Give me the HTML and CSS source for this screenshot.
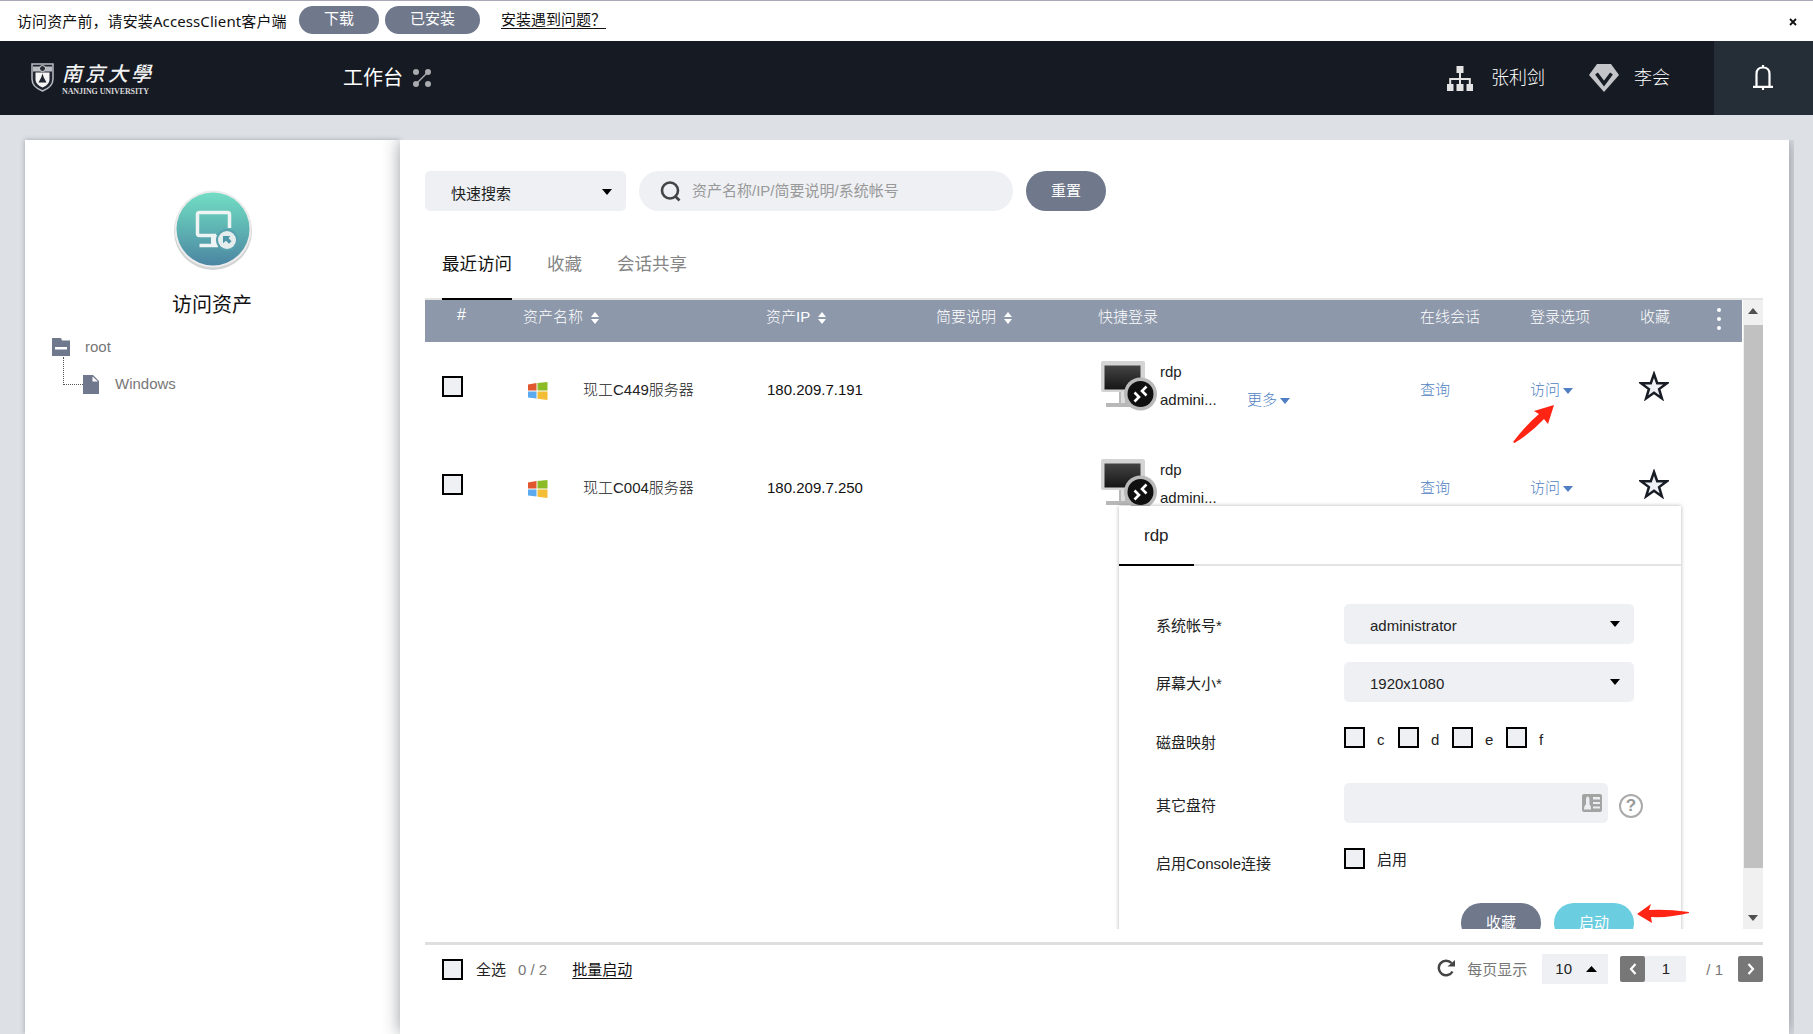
FILE: index.html
```html
<!DOCTYPE html>
<html lang="zh-CN">
<head>
<meta charset="utf-8">
<title>工作台 - 访问资产</title>
<link rel="stylesheet" href="styles.css">
</head>
<body>
<svg class="defs" width="0" height="0" aria-hidden="true">
  <defs>
    <linearGradient id="teal" x1="0" y1="0" x2="0" y2="1"><stop offset="0" stop-color="#74dcc5"/><stop offset=".3" stop-color="#66c5b9"/><stop offset="1" stop-color="#4b85a2"/></linearGradient>
    <linearGradient id="screen" x1="0" y1="0" x2="0" y2="1"><stop offset="0" stop-color="#444"/><stop offset="1" stop-color="#161616"/></linearGradient>
    <symbol id="sort" viewBox="0 0 10 14"><path d="M5 1 9 6H1zM1 8h8L5 13z" fill="#fff"/></symbol>
    <symbol id="down" viewBox="0 0 10 6"><path d="M0 0h10L5 6z" fill="currentColor"/></symbol>
    <symbol id="win" viewBox="0 0 20 18"><path d="M0 2.600 8.500 1v7.500H0z" fill="#e0562f"/><path d="M9.500 1 19.500 0v8.500h-10z" fill="#8cbb25"/><path d="M0 9.500h8.500v7L0 15.500z" fill="#5ba9ee"/><path d="M9.500 9.500h10V18l-10-1.300z" fill="#f4bd36"/></symbol>
    <symbol id="rdp" viewBox="0 0 56 52"><path d="M2 0h40a2 2 0 0 1 2 2v29H2a2 2 0 0 1-2-2V2a2 2 0 0 1 2-2z" fill="#d4d4d4"/><path d="M3.500 4.500h36v24h-36z" fill="url(#screen)"/><path d="M18 31h8v11h6v4H5v-4h13z" fill="#b8b8b8"/><path d="M20 31h4v11h-4z" fill="#ddd"/><circle cx="39.500" cy="33" r="16.500" fill="#b9b9b9"/><circle cx="39.500" cy="33" r="13" fill="#101010"/><path d="m33.500 31.500 4.500 4.500-4.500 4.500M45.500 25.500 41 30l4.500 4.500" fill="none" stroke="#fff" stroke-width="2.600"/></symbol>
    <symbol id="star" viewBox="0 0 30 30"><path d="m15 3 3.200 9.200 9.600.1-7.700 5.800 2.800 9.300-7.900-5.600-7.900 5.600 2.800-9.300-7.700-5.800 9.600-.1z" fill="#eef0f5" stroke="#181c24" stroke-width="2.500"/></symbol>
  </defs>
</svg>

<div class="notice">
  <span class="notice-text">访问资产前，请安装AccessClient客户端</span>
  <button class="pill small">下载</button>
  <button class="pill small wide">已安装</button>
  <a class="help-link">安装遇到问题？</a>
  <svg class="close" width="8" height="8" viewBox="0 0 8 8"><path d="m1 1 6 6M7 1 1 7" stroke="#111" stroke-width="1.800"/></svg>
</div>

<header class="header">
  <div class="logo">
    <svg width="23" height="29" viewBox="0 0 23 29"><path d="M1 1h21v15q0 8-10.500 12Q1 24 1 16z" fill="#20252f" stroke="#b8bbc0" stroke-width="1.500"/><path d="M2 3.500h19v5H2z" fill="#babdc2"/><circle cx="11.500" cy="5.500" r="3" fill="#2a3039" stroke="#ddd"/><path d="M4.500 9.500h14v7q0 5-7 8-7-3-7-8z" fill="#f5f5f5"/><path d="m11.500 10.500 1.300 4 2.700 5h-8l2.700-5z" fill="#20252f"/></svg>
    <div class="logo-words"><span class="logo-cn">南京大學</span><span class="logo-en">NANJING UNIVERSITY</span></div>
  </div>
  <div class="workbench">工作台
    <svg width="18" height="18" viewBox="0 0 18 18"><g fill="#a9abae"><circle cx="3" cy="3" r="3"/><circle cx="15" cy="3" r="3"/><circle cx="3" cy="15" r="3"/><circle cx="15" cy="15" r="3"/></g><path d="M15 3 3 15" stroke="#a9abae" stroke-width="1.500"/></svg>
  </div>
  <div class="user org">
    <svg width="26" height="25" viewBox="0 0 26 25"><path d="M9.500 0h7v7h-7zM0 18h6.500v7H0zM9.500 18h7v7h-7zM19.500 18H26v7h-6.500z" fill="#e4e4e4"/><path d="M13 7v11M3.200 18v-5h19.600v5" fill="none" stroke="#e4e4e4" stroke-width="2"/></svg>
    <span>张利剑</span>
  </div>
  <div class="user">
    <svg width="30" height="28" viewBox="0 0 30 28"><path d="M8 0h14l8 11-15 17L0 11z" fill="#c3c5c9"/><path d="m7.500 9.500 7.500 10 7.500-10" fill="none" stroke="#171b24" stroke-width="3.500"/></svg>
    <span>李会</span>
  </div>
  <div class="bell"><svg width="20" height="26" viewBox="0 0 20 26"><path d="M3.500 21V9q0-6.500 6.500-6.500T16.500 9v12M0 21.800h20M10 0v3M10 22v3" fill="none" stroke="#fff" stroke-width="2.200"/></svg></div>
</header>

<div class="page">
  <aside class="sidebar">
    <svg class="asset-icon" width="82" height="82" viewBox="0 0 82 82"><circle cx="41" cy="42" r="39" fill="#d2d3d4"/><circle cx="41" cy="40" r="38.500" fill="#ececec"/><circle cx="41" cy="40" r="36.500" fill="url(#teal)"/><path d="M57.500 39V25.500q0-2-2-2h-28q-2 0-2 2v19q0 2 2 2H44M27.500 56.500H46" fill="none" stroke="#eef3f3" stroke-width="3.500"/><path d="M39 46h7v10h-7z" fill="#eef3f3"/><circle cx="55" cy="51" r="11" fill="#57a0ae"/><circle cx="55" cy="51" r="9" fill="#e6eded"/><path d="M51 47h7.500l-2 2 3 3.200-2.500 2.500-3-3-3 2.500z" fill="#4f96a8"/></svg>
    <div class="asset-title">访问资产</div>
    <div class="tree">
      <div class="node"><svg width="18" height="18" viewBox="0 0 18 18"><path d="M0 0h9l1 2.500h8V18H0z" fill="#6f788c"/><path d="M3 9h12v2.500H3z" fill="#fff"/></svg><span>root</span></div>
      <div class="node child"><i class="branch"></i><svg width="16" height="19" viewBox="0 0 16 19"><path d="M0 0h10l6 6v13H0z" fill="#6f788c"/><path d="M9.500 1.500v5H15z" fill="#fff"/></svg><span>Windows</span></div>
    </div>
  </aside>

  <main class="main">
    <div class="filters">
      <div class="select quick"><span>快速搜索</span><svg width="10" height="6"><use href="#down"/></svg></div>
      <div class="search"><svg width="21" height="21" viewBox="0 0 21 21"><circle cx="10" cy="9.500" r="8" fill="none" stroke="#444" stroke-width="2.600"/><path d="m15 15 4.500 4.500" stroke="#444" stroke-width="2.600"/></svg><span>资产名称/IP/简要说明/系统帐号</span></div>
      <button class="pill reset">重置</button>
    </div>
    <nav class="tabs"><span class="tab active">最近访问</span><span class="tab">收藏</span><span class="tab">会话共享</span></nav>

    <div class="table-area">
      <div class="table">
        <div class="row head">
          <span class="hash">#</span>
          <span>资产名称<svg class="sort" width="10" height="14"><use href="#sort"/></svg></span>
          <span>资产IP<svg class="sort" width="10" height="14"><use href="#sort"/></svg></span>
          <span>简要说明<svg class="sort" width="10" height="14"><use href="#sort"/></svg></span>
          <span>快捷登录</span><span>在线会话</span><span>登录选项</span><span>收藏</span>
          <svg class="dots" width="4" height="22" viewBox="0 0 4 22"><g fill="#fff"><circle cx="2" cy="2" r="2"/><circle cx="2" cy="11" r="2"/><circle cx="2" cy="20" r="2"/></g></svg>
        </div>
        <div class="row item">
          <i class="check"></i>
          <span class="name"><svg width="20" height="18"><use href="#win"/></svg>现工C449服务器</span>
          <span class="ip">180.209.7.191</span><span></span>
          <div class="login"><svg width="56" height="52"><use href="#rdp"/></svg><div class="login-text"><span>rdp</span><span>admini...</span></div><a class="more">更多<svg width="10" height="6"><use href="#down"/></svg></a></div>
          <a>查询</a><a>访问<svg width="10" height="6"><use href="#down"/></svg></a>
          <svg class="star" width="30" height="30"><use href="#star"/></svg>
          <svg class="pointer visit" width="42" height="38" viewBox="0 0 42 38"><path d="M41 0 21 6l5 3Q13 20 0 37l1.500 1Q18 28 31 14l4 5z" fill="#ff2413"/></svg>
        </div>
        <div class="row item">
          <i class="check"></i>
          <span class="name"><svg width="20" height="18"><use href="#win"/></svg>现工C004服务器</span>
          <span class="ip">180.209.7.250</span><span></span>
          <div class="login"><svg width="56" height="52"><use href="#rdp"/></svg><div class="login-text"><span>rdp</span><span>admini...</span></div></div>
          <a>查询</a><a>访问<svg width="10" height="6"><use href="#down"/></svg></a>
          <svg class="star" width="30" height="30"><use href="#star"/></svg>
        </div>

        <section class="popup">
          <div class="popup-head"><span>rdp</span></div>
          <div class="form">
            <div class="field"><label>系统帐号*</label><div class="select"><span>administrator</span><svg width="10" height="6"><use href="#down"/></svg></div></div>
            <div class="field"><label>屏幕大小*</label><div class="select"><span>1920x1080</span><svg width="10" height="6"><use href="#down"/></svg></div></div>
            <div class="field drives"><label>磁盘映射</label><div class="checks"><i class="check"></i><span>c</span><i class="check"></i><span>d</span><i class="check"></i><span>e</span><i class="check"></i><span>f</span></div></div>
            <div class="field other"><label>其它盘符</label>
              <div class="input"><svg width="20" height="18" viewBox="0 0 20 18"><rect width="20" height="18" rx="2" fill="#a3a3a3"/><path d="M2 15.500q0-4 2-5V6q0-3.500 1.700-3.500T7.500 6v4.500q1.500 1 1.500 5zM11 3h7v2.500h-7zM11 8h7v2h-7zM11 12.500h7v2h-7z" fill="#eceef2"/></svg></div>
              <span class="question">?</span>
            </div>
            <div class="field console"><label>启用Console连接</label><div class="checks"><i class="check"></i><span>启用</span></div></div>
            <div class="actions"><button class="pill">收藏</button><button class="pill start">启动</button></div>
          </div>
        </section>
      </div>
      <div class="scrollbar"><svg width="10" height="6" viewBox="0 0 10 6"><path d="M0 6h10L5 0z" fill="#505050"/></svg><i class="thumb"></i><svg width="10" height="6" viewBox="0 0 10 6"><path d="M0 0h10L5 6z" fill="#505050"/></svg></div>
      <svg class="pointer launch" width="52" height="20" viewBox="0 0 52 20"><path d="M0 10 14 0l-2 6q18-1 40 2v1Q32 14 14 13l1 6z" fill="#ff2413"/></svg>
    </div>

    <footer class="footer">
      <i class="check"></i><span class="all">全选</span><span class="count">0 / 2</span><a class="batch">批量启动</a>
      <svg class="refresh" width="18" height="18" viewBox="0 0 18 18"><path d="M15.500 12.500A7.300 7.300 0 1 1 14.500 4" fill="none" stroke="#444" stroke-width="2.500"/><path d="M10.500 7.500H18V1z" fill="#444"/></svg>
      <span class="per">每页显示</span>
      <div class="size">10<svg width="11" height="6" viewBox="0 0 11 6"><path d="M0 6h11L5.500 0z"/></svg></div>
      <div class="step"><svg width="8" height="12" viewBox="0 0 8 12"><path d="M6.500 1 2 6l4.500 5" fill="none" stroke="#fff" stroke-width="2.200"/></svg></div>
      <div class="current">1</div><span class="total">/ 1</span>
      <div class="step"><svg width="8" height="12" viewBox="0 0 8 12"><path d="M1.500 1 6 6l-4.500 5" fill="none" stroke="#fff" stroke-width="2.200"/></svg></div>
    </footer>
  </main>
</div>
</body>
</html>
```
FILE: styles.css
```css
* { box-sizing: border-box; }
body { margin: 0; height: 1034px; overflow: hidden; background: #dde1e6; color: #222; font: 15px/20px "Liberation Sans", "Noto Sans CJK SC", sans-serif; display: flex; flex-direction: column; }
svg { display: block; flex: none; }
.defs { position: absolute; }
button { border: 0; padding: 0; font: inherit; }
span, a { white-space: nowrap; }
a { color: #4f7fc2; display: flex; gap: 3px; }
a svg { margin-top: 8px; }
.pill { width: 80px; height: 40px; border-radius: 20px; background: #70788c; color: #fff; flex: none; }

.notice { height: 41px; flex: none; background: #fff; border-top: 1px solid #a9a7b8; padding-left: 17px; display: flex; align-items: flex-start; color: #111; font-family: "Noto Sans", "Noto Sans CJK SC", sans-serif; }
.notice-text { width: 282px; padding-top: 10px; letter-spacing: .1px; }
.pill.small { width: 80px; height: 28px; border-radius: 14px; margin: 5px 6px 0 0; line-height: 25px; padding-bottom: 3px; }
.pill.small.wide { width: 95px; margin-right: 21px; }
.help-link { color: #111; margin-top: 8px; text-decoration: underline; text-underline-offset: 3px; }
.close { margin: 17px 16px 0 auto; }

.header { height: 74px; flex: none; background: #161a23; color: #fff; display: flex; align-items: center; }
.logo { width: 343px; padding-left: 31px; display: flex; gap: 8px; align-items: center; height: 42px; margin-top: -2px; }
.logo-words { display: flex; flex-direction: column; }
.logo-cn { font: italic 500 20px/27px "Noto Sans CJK SC", sans-serif; letter-spacing: 3px; color: #f3f3f3; height: 29px; }
.logo-en { font: bold 8px/8px "Liberation Serif", serif; color: #d6d7d9; letter-spacing: -.1px; }
.workbench { font-size: 20px; display: flex; align-items: center; gap: 10px; flex: 1; }
.user { font-size: 18px; font-weight: 300; display: flex; align-items: center; gap: 15px; margin-right: 44px; }
.user.org { gap: 18px; margin-right: 44px; }
.bell { width: 99px; height: 74px; background: #252d36; display: flex; align-items: center; justify-content: center; padding-right: 2px; }

.page { flex: 1; display: flex; padding: 25px 24px 0 25px; min-height: 0; }
.sidebar { width: 375px; background: #fff; box-shadow: 0 0 5px rgba(60, 70, 80, .4); display: flex; flex-direction: column; }
.asset-icon { margin: 49px 0 0 147px; }
.asset-title { font-size: 20px; line-height: 28px; margin: 20px 0 0 147px; color: #111; }
.tree { padding: 18px 0 0 27px; color: #777; }
.node { display: flex; align-items: center; height: 20px; gap: 15px; }
.node.child { margin-top: 17px; padding-left: 11px; gap: 0; }
.node.child span { margin-left: 16px; }
.branch { width: 20px; height: 28px; margin-top: -26px; border: dotted #555; border-width: 0 0 1px 1px; }

.main { flex: 1; background: #fff; box-shadow: 0 0 16px rgba(30, 35, 45, .45); position: relative; clip-path: inset(0 -5px -20px -25px); padding: 31px 26px 0 25px; min-width: 0; display: flex; flex-direction: column; }
.filters { display: flex; height: 40px; gap: 13px; }
.select { width: 290px; height: 40px; background: #eef0f4; border-radius: 5px; display: flex; justify-content: space-between; padding: 12px 14px 0 26px; color: #222; }
.select svg { margin-top: 5px; color: #000; }
.quick { width: 201px; padding: 13px 14px 0 26px; }
.search { width: 374px; border-radius: 20px; background: #eef0f4; padding-left: 21px; display: flex; align-items: center; gap: 11px; color: #999; }
.tabs { display: flex; gap: 35px; padding: 41px 0 0 17px; height: 89px; border-bottom: 2px solid #e4e4e4; font-size: 17.500px; line-height: 24px; color: #858585; }
.tab { height: 48px; }
.tab.active { color: #111; border-bottom: 2px solid #000; }

.table-area { height: 629px; display: flex; position: relative; }
.table { width: 1317px; position: relative; overflow: hidden; font-weight: 300; }
.row { display: grid; grid-template-columns: 98px 243px 170px 162px 322px 110px 110px 79px 1fr; }
.row > * { justify-self: start; }
.head { height: 42px; background: #8d98ab; color: #fff; line-height: 34px; }
.head span { display: flex; }
.hash { padding-left: 32px; line-height: 30px; font-size: 16px; }
.sort { margin: 11px 0 0 7px; }
.dots { margin: 8px 0 0 -2px; }
.item { height: 98px; padding-top: 19px; position: relative; }
.check { display: block; width: 21px; height: 21px; border: 2px solid #000; background: #eef0f4; flex: none; }
.item .check { margin: 15px 0 0 17px; }
.item > span, .item > a { padding-top: 19px; }
.name { display: flex; gap: 35px; padding-left: 5px; }
.name svg { margin-top: 2px; }
.ip { color: #111; padding-left: 1px; font-weight: 400; }
.login { display: flex; padding-left: 3px; }
.login-text { margin-left: 3px; width: 87px; display: flex; flex-direction: column; gap: 8px; font-weight: 400; padding-top: 1px; }
.more { padding-top: 29px; }
.star { margin: 10px 0 0 -1px; }
.pointer { position: absolute; }
.visit { left: 1088px; top: 63px; }
.launch { left: 1212px; top: 604px; z-index: 2; }

.popup { position: absolute; left: 694px; top: 206px; width: 562px; height: 460px; background: #fff; box-shadow: 0 0 4px rgba(0, 0, 0, .3); font-weight: 400; }
.popup-head { height: 60px; border-bottom: 2px solid #e4e4e4; font-size: 17px; }
.popup-head span { display: block; width: 75px; height: 60px; padding: 20px 0 0 25px; border-bottom: 2px solid #000; }
.form { padding: 38px 38px 0 37px; }
.field { display: flex; height: 40px; margin-bottom: 18px; }
.field label { width: 188px; padding-top: 12px; flex: none; }
.field .select svg { margin-top: 5px; }
.drives { margin-bottom: 23px; }
.drives label, .other label { padding-top: 13px; }
.checks { display: flex; padding-top: 7px; }
.checks span { width: 33px; padding: 3px 0 0 12px; }
.console .checks span { padding-top: 2px; }
.input { width: 264px; background: #eef0f4; border-radius: 5px; display: flex; justify-content: flex-end; padding: 11px 6px 0; }
.question { width: 24px; height: 24px; border: 2px solid #aaa; border-radius: 50%; margin: 11px 0 0 11px; text-align: center; font: bold 17px/20px "Liberation Sans", sans-serif; color: #999; flex: none; }
.console { margin-bottom: 22px; }
.console label { padding-top: 13px; }
.actions { display: flex; justify-content: flex-end; gap: 13px; padding-right: 9px; }
.start { background: #6acde0; }

.scrollbar { width: 20px; margin-left: 1px; background: #f0f0f0; display: flex; flex-direction: column; align-items: center; padding: 8px 0; }
.thumb { width: 19px; height: 543px; margin: 11px 0 47px; background: #c1c1c1; flex: none; }

.footer { margin-top: 13px; border-top: 3px solid #dedfe0; height: 60px; width: 1338px; display: flex; align-items: flex-start; padding: 9px 0 0 17px; }
.footer .check { margin-top: 5px; }
.footer > span, .footer .batch { padding-top: 6px; }
.all { margin-left: 13px; }
.count { margin: 0 25px 0 12px; color: #777; }
.batch { color: #111; text-decoration: underline; text-underline-offset: 3px; }
.refresh { margin: 5px 12px 0 auto; }
.per { color: #777; margin-right: 15px; }
.size { width: 66px; height: 30px; background: #eef0f4; padding: 5px 11px 0 13px; display: flex; justify-content: space-between; margin-right: 12px; }
.size svg { margin-top: 7px; }
.step { width: 25px; height: 26px; background: #777; border-radius: 2px; margin-top: 2px; display: flex; align-items: center; justify-content: center; }
.current { width: 41px; height: 26px; margin-top: 2px; background: #eef0f4; line-height: 26px; text-align: center; }
.total { color: #777; margin: 0 15px 0 20px; }
```
